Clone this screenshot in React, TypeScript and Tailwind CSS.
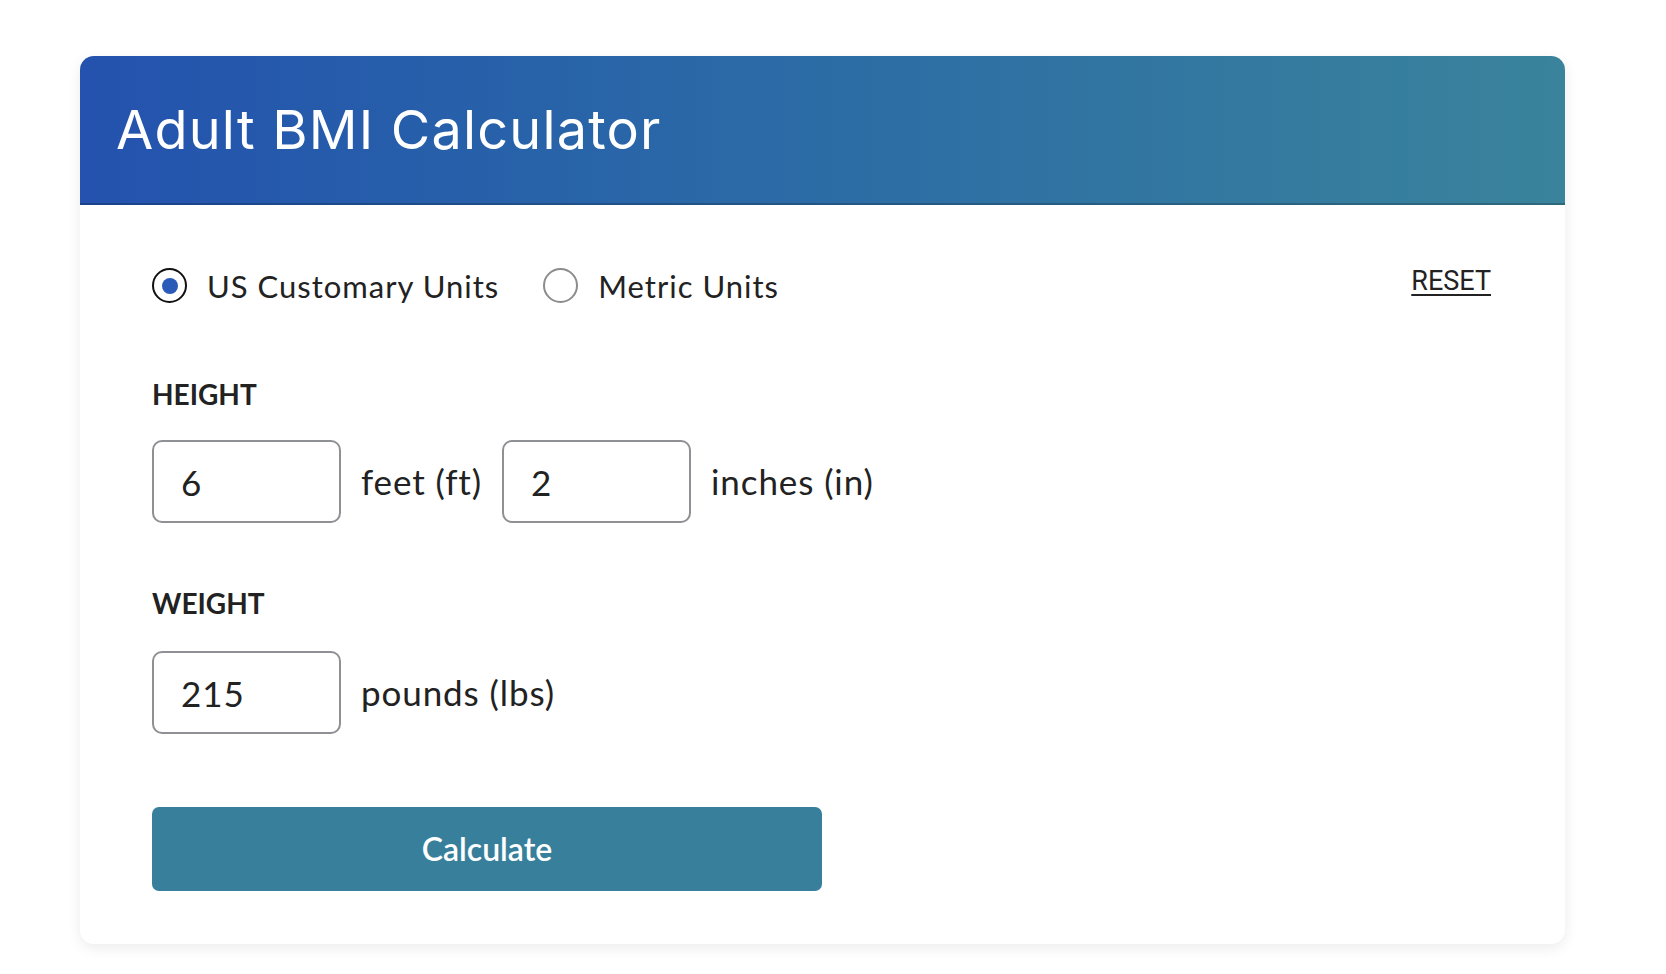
import React, { useState } from 'react';

function Radio({ checked, label, onClick }: { checked: boolean; label: string; onClick: () => void }) {
  return (
    <label onClick={onClick} className="flex items-center gap-[20px] cursor-pointer">
      <span
        className={`w-[35px] h-[35px] rounded-full border-2 flex items-center justify-center ${
          checked ? 'border-[#111]' : 'border-[#8c8c8c]'
        }`}
      >
        {checked && <span className="w-[16px] h-[16px] rounded-full bg-[#2a5bb8]" />}
      </span>
      <span className="text-[31px] leading-[34px] tracking-[1px] text-[#222]">{label}</span>
    </label>
  );
}

function NumInput({ value, onChange }: { value: string; onChange: (v: string) => void }) {
  return (
    <input
      value={value}
      onChange={(e) => onChange(e.target.value)}
      className="w-[189px] h-[83px] border-2 border-[#8e9094] rounded-[10px] px-[27px] text-[35px] tracking-[0.9px] text-[#222] outline-none"
    />
  );
}

export default function App() {
  const [units, setUnits] = useState<'us' | 'metric'>('us');
  const [feet, setFeet] = useState('6');
  const [inches, setInches] = useState('2');
  const [pounds, setPounds] = useState('215');

  return (
    <div className="min-h-screen bg-white pt-[56px] pl-[80px]" style={{ fontFamily: 'Lato, "Noto Sans", sans-serif' }}>
      <div className="w-[1485px] bg-white rounded-[14px] overflow-hidden shadow-[0_4px_14px_rgba(0,0,0,0.08)]">
        <div className="h-[149px] flex items-center pl-[36px] bg-linear-to-r from-[#2452ae] to-[#3a839b] border-b-2 border-black/20">
          <h1 className="text-[54px] text-white font-normal tracking-[1.2px]" style={{ fontFamily: 'Inter, sans-serif' }}>
            Adult BMI Calculator
          </h1>
        </div>

        <div className="pl-[72px] pr-[74px] pt-[63px] pb-[53px]">
          <div className="flex items-center">
            <div className="flex items-center gap-[44px]">
              <Radio checked={units === 'us'} label="US Customary Units" onClick={() => setUnits('us')} />
              <Radio checked={units === 'metric'} label="Metric Units" onClick={() => setUnits('metric')} />
            </div>
            <button
              onClick={() => { setFeet(''); setInches(''); setPounds(''); }}
              className="ml-auto -mt-[8px] text-[27px] text-[#222] underline underline-offset-[4px]"
              style={{ fontFamily: 'Roboto, sans-serif' }}
            >
              RESET
            </button>
          </div>

          <div className="mt-[77px] text-[28px] leading-[28px] font-bold text-[#222]">HEIGHT</div>
          <div className="mt-[32px] flex items-center gap-[20px]">
            <NumInput value={feet} onChange={setFeet} />
            <span className="text-[35px] tracking-[0.9px] text-[#222]">feet (ft)</span>
            <NumInput value={inches} onChange={setInches} />
            <span className="text-[35px] tracking-[0.9px] text-[#222]">inches (in)</span>
          </div>

          <div className="mt-[66px] text-[28px] leading-[28px] font-bold text-[#222]">WEIGHT</div>
          <div className="mt-[34px] flex items-center gap-[20px]">
            <NumInput value={pounds} onChange={setPounds} />
            <span className="text-[35px] tracking-[0.9px] text-[#222]">pounds (lbs)</span>
          </div>

          <button className="mt-[73px] w-[670px] h-[84px] bg-[#387f9c] rounded-[7px] text-white text-[32px] font-semibold">
            Calculate
          </button>
        </div>
      </div>
    </div>
  );
}
